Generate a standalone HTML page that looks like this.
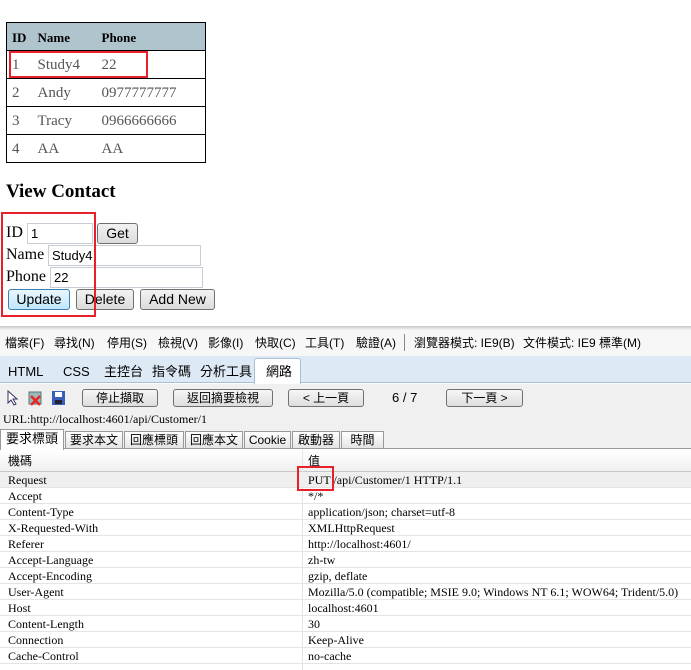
<!DOCTYPE html><html><head><meta charset="utf-8"><style>
*{margin:0;padding:0;box-sizing:border-box}
body{width:691px;height:670px;overflow:hidden;background:#fff;position:relative;font-family:"Liberation Serif","Noto Serif CJK SC",serif}
.a{position:absolute;white-space:nowrap}
.cj{font-family:"Liberation Sans","Noto Sans CJK TC",sans-serif}
table.t{position:absolute;left:6px;top:22px;width:200px;border-collapse:collapse;border:1px solid #000}
table.t td{height:28px;border-bottom:1px solid #000;font-size:15px;color:#555;padding-left:5px;padding-top:2px}
table.t tr.h td{background:#b0c4ce;color:#000;font-weight:bold;font-size:13px}
.inp{position:absolute;height:21px;border:1px solid #c8ccd4;font:13px "Liberation Sans",sans-serif;padding:2px 3px;color:#000}
.btn{position:absolute;height:21px;border:1px solid #707070;border-radius:3px;background:linear-gradient(#f2f2f2,#dcdcdc);font:14px "Liberation Sans",sans-serif;text-align:center;line-height:19px}
.red{position:absolute;border:2px solid #e8202a}
.tb{position:absolute;top:389px;height:18px;border:1px solid #707070;border-radius:3px;background:linear-gradient(#f6f6f6,#dedede);font:12px "Liberation Sans","Noto Sans CJK TC",sans-serif;text-align:center;line-height:16px}
.row{position:absolute;left:0;width:691px;height:16px;border-bottom:1px solid #e4e4e4;font-size:12px}
.row span{position:absolute;top:1px}
.m{position:absolute;top:336px;font-size:12px;line-height:14px}
.tab{position:absolute;top:364px;font-size:13px;line-height:15px}
.st{position:absolute;top:431px;height:18px;border:1px solid #999;background:linear-gradient(#fff,#e4e4e4);font-size:12px;line-height:16px;text-align:center}
</style></head><body>
<table class="t">
<tr class="h"><td style="width:26px">ID</td><td style="width:64px">Name</td><td>Phone</td></tr>
<tr><td>1</td><td>Study4</td><td>22</td></tr>
<tr><td>2</td><td>Andy</td><td>0977777777</td></tr>
<tr><td>3</td><td>Tracy</td><td>0966666666</td></tr>
<tr><td>4</td><td>AA</td><td>AA</td></tr>
</table>
<div class="red" style="left:9px;top:51px;width:139px;height:27px"></div>
<div class="a" style="left:6px;top:181px;font-size:19px;font-weight:bold">View Contact</div>
<div class="a" style="left:6px;top:224px;font-size:16px">ID</div>
<div class="inp" style="left:27px;top:223px;width:66px">1</div>
<div class="btn" style="left:97px;top:223px;width:41px">Get</div>
<div class="a" style="left:6px;top:246px;font-size:16px">Name</div>
<div class="inp" style="left:48px;top:245px;width:153px">Study4</div>
<div class="a" style="left:6px;top:268px;font-size:16px">Phone</div>
<div class="inp" style="left:50px;top:267px;width:153px">22</div>
<div class="btn" style="left:8px;top:289px;width:62px;border-color:#3c7fb1;background:linear-gradient(#eaf6fd,#bee6fd)">Update</div>
<div class="btn" style="left:76px;top:289px;width:58px">Delete</div>
<div class="btn" style="left:140px;top:289px;width:75px">Add New</div>
<div class="red" style="left:1px;top:212px;width:95px;height:105px"></div>

<div class="a" style="left:0;top:326px;width:691px;height:4px;background:linear-gradient(#c8c8c8,#f4f4f4)"></div>
<div class="a" style="left:0;top:330px;width:691px;height:26px;background:#f7f7f7"></div>
<div class="cj">
<span class="m" style="left:5px">檔案(F)</span><span class="m" style="left:54px">尋找(N)</span><span class="m" style="left:107px">停用(S)</span><span class="m" style="left:158px">檢視(V)</span><span class="m" style="left:208px">影像(I)</span><span class="m" style="left:255px">快取(C)</span><span class="m" style="left:305px">工具(T)</span><span class="m" style="left:356px">驗證(A)</span>
<span class="a" style="left:404px;top:334px;width:1px;height:17px;background:#888"></span>
<span class="m" style="left:414px">瀏覽器模式: IE9(B)</span><span class="m" style="left:523px">文件模式: IE9 標準(M)</span>
</div>
<div class="a" style="left:0;top:356px;width:691px;height:27px;background:#dde9f5;border-bottom:1px solid #a9bfd6"></div>
<div class="a" style="left:254px;top:358px;width:47px;height:26px;background:#fff;border:1px solid #a9bfd6;border-bottom:none;border-radius:3px 3px 0 0"></div>
<div class="cj">
<span class="tab" style="left:8px">HTML</span><span class="tab" style="left:63px">CSS</span><span class="tab" style="left:104px">主控台</span><span class="tab" style="left:152px">指令碼</span><span class="tab" style="left:200px">分析工具</span><span class="tab" style="left:266px">網路</span>
</div>
<div class="a" style="left:0;top:384px;width:691px;height:27px;background:#f0f0f0"></div>
<svg class="a" style="left:6px;top:390px" width="60" height="16"><path d="M2 1 L2 13 L5 10 L8 15 L10 14 L7 9 L11 9 Z" fill="#fff" stroke="#336" stroke-width="1"/><rect x="23" y="2" width="12" height="12" fill="#9bb" stroke="#577"/><path d="M25 6 L34 15 M34 6 L25 15" stroke="#e22" stroke-width="2.5"/><rect x="46" y="1" width="13" height="14" fill="#3b5fb8"/><rect x="49" y="2" width="7" height="5" fill="#fff"/><rect x="49" y="10" width="7" height="4" fill="#223"/></svg>
<div class="tb" style="left:82px;width:76px">停止擷取</div>
<div class="tb" style="left:173px;width:100px">返回摘要檢視</div>
<div class="tb" style="left:288px;width:76px">&lt; 上一頁</div>
<div class="a cj" style="left:392px;top:390px;font-size:13px">6 / 7</div>
<div class="tb" style="left:446px;width:77px">下一頁 &gt;</div>
<div class="a" style="left:0;top:411px;width:691px;height:18px;background:#f0f0f0;font-size:12px;padding:1px 3px">URL:http://localhost:4601/api/Customer/1</div>
<div class="a" style="left:0;top:429px;width:691px;height:20px;background:#f0f0f0;border-bottom:1px solid #999"></div>
<div class="cj">
<div class="a" style="left:0;top:429px;width:64px;height:21px;background:#fff;border:1px solid #999;border-bottom:none;font-size:13px;line-height:18px;text-align:center">要求標頭</div>
<div class="st" style="left:65px;width:58px">要求本文</div>
<div class="st" style="left:124px;width:60px">回應標頭</div>
<div class="st" style="left:185px;width:58px">回應本文</div>
<div class="st" style="left:244px;width:47px">Cookie</div>
<div class="st" style="left:292px;width:48px">啟動器</div>
<div class="st" style="left:341px;width:43px">時間</div>
</div>
<div class="a" style="left:0;top:450px;width:691px;height:22px;background:linear-gradient(#fff,#f0f0f0);border-bottom:1px solid #c8c8c8"></div>
<div class="a cj" style="left:8px;top:454px;font-size:12px;line-height:14px">機碼</div>
<div class="a cj" style="left:308px;top:454px;font-size:12px;line-height:14px">值</div>
<div class="a" style="left:302px;top:450px;width:1px;height:220px;background:#e4e4e4"></div>
<div class="row" style="top:472px;background:#efefef"><span style="left:8px">Request</span><span style="left:308px">PUT /api/Customer/1 HTTP/1.1</span></div>
<div class="row" style="top:488px"><span style="left:8px">Accept</span><span style="left:308px">*/*</span></div>
<div class="row" style="top:504px"><span style="left:8px">Content-Type</span><span style="left:308px">application/json; charset=utf-8</span></div>
<div class="row" style="top:520px"><span style="left:8px">X-Requested-With</span><span style="left:308px">XMLHttpRequest</span></div>
<div class="row" style="top:536px"><span style="left:8px">Referer</span><span style="left:308px">http://localhost:4601/</span></div>
<div class="row" style="top:552px"><span style="left:8px">Accept-Language</span><span style="left:308px">zh-tw</span></div>
<div class="row" style="top:568px"><span style="left:8px">Accept-Encoding</span><span style="left:308px">gzip, deflate</span></div>
<div class="row" style="top:584px"><span style="left:8px">User-Agent</span><span style="left:308px">Mozilla/5.0 (compatible; MSIE 9.0; Windows NT 6.1; WOW64; Trident/5.0)</span></div>
<div class="row" style="top:600px"><span style="left:8px">Host</span><span style="left:308px">localhost:4601</span></div>
<div class="row" style="top:616px"><span style="left:8px">Content-Length</span><span style="left:308px">30</span></div>
<div class="row" style="top:632px"><span style="left:8px">Connection</span><span style="left:308px">Keep-Alive</span></div>
<div class="row" style="top:648px"><span style="left:8px">Cache-Control</span><span style="left:308px">no-cache</span></div>
<div class="red" style="left:297px;top:466px;width:37px;height:25px"></div>
</body></html>
